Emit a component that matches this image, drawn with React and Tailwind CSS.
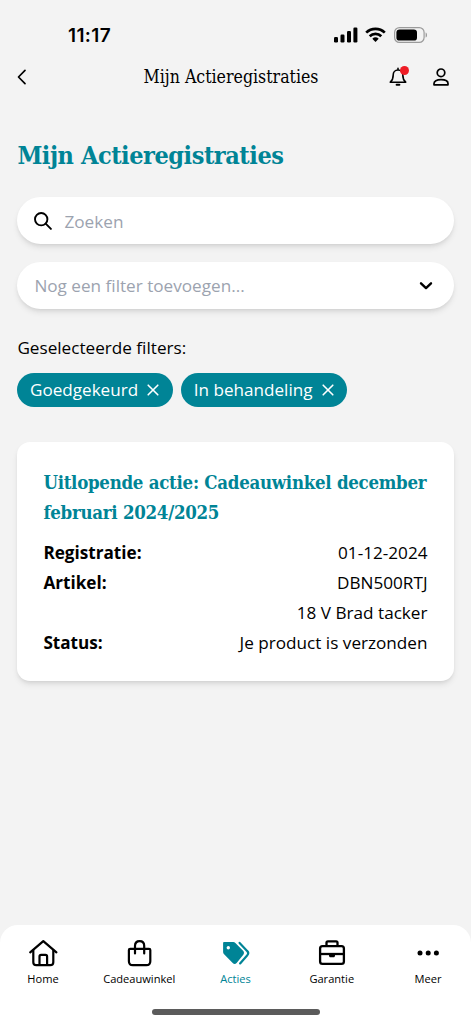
import React from 'react';

const SLAB = "font-['Roboto_Slab','DejaVu_Serif_Condensed','DejaVu_Serif',serif] font-stretch-condensed";

// Status bar
function StatusBar() {
    return (
        <div className="flex h-[54px] items-end justify-between pl-[68px] pr-[43px] pb-[8px]">
            <span className="relative top-px font-['Inter','Liberation_Sans',sans-serif] text-[19px] leading-[22px] font-semibold tracking-[0.4px]">11:17</span>
            <div className="flex h-[22px] items-center">
                <svg width="24" height="16" viewBox="0 0 24 16" fill="black">
                    <rect x="0" y="10" width="4" height="5.5" rx="1.2" />
                    <rect x="6.5" y="7.5" width="4" height="8" rx="1.2" />
                    <rect x="13" y="4" width="4" height="11.5" rx="1.2" />
                    <rect x="19.4" y="0.5" width="4" height="15" rx="1.2" />
                </svg>
                <svg className="ml-[7px]" width="21" height="16" viewBox="0 0 21 16" fill="none" stroke="black" strokeWidth="2.7">
                    <path d="M1.2 5.6a13.4 13.4 0 0 1 18.6 0" />
                    <path d="M4.7 9.2a8.4 8.4 0 0 1 11.6 0" />
                    <path d="M7.3 11.7a4.7 4.7 0 0 1 6.4 0L10.5 15z" fill="black" stroke="none" />
                </svg>
                <svg className="ml-[8px]" width="34" height="16" viewBox="0 0 34 16" fill="none">
                    <rect x="0.6" y="0.6" width="29.5" height="14.8" rx="4.8" stroke="#9b9b9b" strokeWidth="1.2" />
                    <rect x="2.4" y="2.4" width="20.6" height="11.2" rx="3.2" fill="black" />
                    <path d="M31.6 5.4c1.9.6 1.9 4.6 0 5.2z" fill="#9b9b9b" />
                </svg>
            </div>
        </div>
    );
}

// Page header with back button, notifications and profile
function Header() {
    return (
        <header className="grid h-[46px] grid-cols-[75px_1fr_84px] items-center">
            <svg className="ml-[16px]" width="12" height="18" viewBox="0 0 12 18" fill="none" stroke="black" strokeWidth="1.7" strokeLinecap="round" strokeLinejoin="round">
                <path d="M9 2.3 2.5 9 9 15.7" />
            </svg>
            <p className={`text-center text-[17.6px] whitespace-nowrap ${SLAB}`}>Mijn Actieregistraties</p>
            <div className="flex items-center justify-end gap-[26px] pr-[22px]">
                <div className="relative">
                    <svg width="18" height="20" viewBox="0 0 18 20" fill="none" stroke="black" strokeWidth="1.6" strokeLinecap="round" strokeLinejoin="round">
                        <path d="M9 1.4V3M9 3C6 3 4.2 5.3 4.2 8c0 3.8-1 5.6-2.9 7.2h15.4C14.8 13.6 13.8 11.8 13.8 8c0-2.7-1.8-5-4.8-5z" />
                        <path d="M7.6 17.8h2.8" strokeWidth="2" />
                    </svg>
                    <span className="absolute top-[-1px] right-[-2px] h-[9px] w-[9px] rounded-full bg-[#ee1c25]"></span>
                </div>
                <svg width="16" height="18" viewBox="0 0 16 18" fill="none" stroke="black" strokeWidth="1.7" strokeLinejoin="round">
                    <circle cx="8" cy="4.8" r="3.8" />
                    <path d="M1 16.8v-1.3C1 13.2 3.6 11.7 8 11.7s7 1.5 7 3.8v1.3z" />
                </svg>
            </div>
        </header>
    );
}

const filters = ['Goedgekeurd', 'In behandeling'];

const details = [
    { label: 'Registratie:', value: '01-12-2024' },
    { label: 'Artikel:', value: 'DBN500RTJ' },
    { label: '', value: '18 V Brad tacker' },
    { label: 'Status:', value: 'Je product is verzonden' }
];

function HomeIcon() {
    return (
        <svg width="30" height="28" viewBox="0 0 30 28" fill="none" stroke="black" strokeWidth="2.2" strokeLinecap="round" strokeLinejoin="round">
            <path d="M2.2 13.4 15.3 2.1l13.1 11.3" />
            <path d="M5.3 11.4v11.8c0 1.9 1.1 3 3 3h14c1.9 0 3-1.1 3-3V11.4" />
            <path d="M11.5 26v-8.6c0-1 .6-1.6 1.6-1.6h4.4c1 0 1.6.6 1.6 1.6V26" />
        </svg>
    );
}

function BagIcon() {
    return (
        <svg width="30" height="28" viewBox="0 0 30 28" fill="none" stroke="black" strokeWidth="2.2" strokeLinecap="round" strokeLinejoin="round">
            <path d="M6.2 9.8h18.8c.8 0 1.3.5 1.3 1.3v11.1c0 2.5-1.5 4-4 4H8.9c-2.5 0-4-1.5-4-4V11.1c0-.8.5-1.3 1.3-1.3z" />
            <path d="M11 14.5V6.8c0-2.8 1.8-4.7 4.6-4.7s4.6 1.9 4.6 4.7v7.7" />
        </svg>
    );
}

function TagsIcon() {
    return (
        <svg width="30" height="28" viewBox="0 0 30 28" fill="none">
            <g transform="translate(-1 0)">
                <path d="M4 3h9.2c.9 0 1.6.3 2.2.9l7.7 7.9c1.2 1.2 1.2 3 0 4.2l-6.5 8c-1.2 1.2-2.7 1.2-3.9 0l-8.6-8.7a3.2 3.2 0 0 1-1-2.3V4c0-.6.3-1 .9-1zm4.3 4a1.7 1.7 0 1 0 0 3.4 1.7 1.7 0 0 0 0-3.4z" fill="#008496" fillRule="evenodd" />
                <path d="m19.6 3.9 7.5 8c1.4 1.4 1.4 3.2 0 4.6l-7 7.9" stroke="#008496" strokeWidth="2.2" strokeLinecap="round" />
            </g>
        </svg>
    );
}

function BriefcaseIcon() {
    return (
        <svg width="30" height="28" viewBox="0 0 30 28" fill="none" stroke="black" strokeWidth="2.3" strokeLinejoin="round">
            <rect x="3.1" y="7.2" width="23.8" height="17.6" rx="2.4" />
            <path d="M9.5 7V3.7c0-.9.5-1.4 1.4-1.4h8.2c.9 0 1.4.5 1.4 1.4V7" />
            <path d="M3.1 15h23.8" />
            <path d="M12 15h6v1.8c0 .9-.6 1.5-1.5 1.5h-3c-.9 0-1.5-.6-1.5-1.5z" fill="black" stroke="none" />
        </svg>
    );
}

function DotsIcon() {
    return (
        <svg width="30" height="28" viewBox="0 0 30 28" fill="black">
            <circle cx="7" cy="14" r="2.5" />
            <circle cx="15.2" cy="14" r="2.5" />
            <circle cx="23.4" cy="14" r="2.5" />
        </svg>
    );
}

const navItems = [
    { label: 'Home', icon: HomeIcon },
    { label: 'Cadeauwinkel', icon: BagIcon },
    { label: 'Acties', icon: TagsIcon, active: true },
    { label: 'Garantie', icon: BriefcaseIcon },
    { label: 'Meer', icon: DotsIcon }
];

function App() {
    return (
        <div className="flex h-screen flex-col overflow-hidden bg-[#f3f3f3] font-['Open_Sans','Noto_Sans',sans-serif] text-black">
            <StatusBar />
            <Header />

            <main className="flex-1 pr-[17.5px] pl-[17.4px]">
                <h1 className={`mt-[38px] text-[25px] leading-[36px] font-bold tracking-[-0.45px] whitespace-nowrap text-[#008496] ${SLAB}`}>
                    Mijn Actieregistraties
                </h1>

                {/* Search */}
                <label className="mt-[23px] flex h-[47px] items-center rounded-full bg-white pl-[17px] shadow-md">
                    <svg className="shrink-0" width="18" height="18" viewBox="0 0 18 18" fill="none" stroke="black" strokeWidth="1.9" strokeLinecap="round">
                        <circle cx="7.2" cy="7.2" r="6.2" />
                        <path d="m11.7 11.7 5.2 5.2" />
                    </svg>
                    <input
                        type="text"
                        placeholder="Zoeken"
                        className="ml-[12px] w-full bg-transparent pt-[2px] text-[17.2px] outline-none placeholder:text-[#9ca3af]"
                    />
                </label>

                {/* Filter select */}
                <button className="mt-[18px] flex h-[47px] w-full items-center justify-between rounded-full bg-white pr-[21px] pl-[17px] text-[17.15px] text-[#9ca3af] shadow-md">
                    <span>Nog een filter toevoegen...</span>
                    <svg width="14" height="10" viewBox="0 0 14 10" fill="none" stroke="black" strokeWidth="2.4" strokeLinecap="round" strokeLinejoin="round">
                        <path d="m2 2.3 5 4.8 5-4.8" />
                    </svg>
                </button>

                <p className="mt-[26px] text-[17.15px] leading-[26px]">Geselecteerde filters:</p>
                <div className="mt-[12px] flex gap-[8.5px]">
                    {filters.map((filter) => (
                        <button key={filter} className="flex h-[34px] items-center rounded-full bg-[#008496] px-[12.6px] text-[17.1px] whitespace-nowrap text-white">
                            {filter}
                            <svg className="ml-[8px]" width="14" height="14" viewBox="0 0 14 14" stroke="white" strokeWidth="1.6" strokeLinecap="round">
                                <path d="m2.2 2.2 9.6 9.6M11.8 2.2l-9.6 9.6" />
                            </svg>
                        </button>
                    ))}
                </div>

                {/* Registration card */}
                <section className="mt-[35px] h-[239px] rounded-[13px] bg-white px-[26px] pt-[26px] shadow-md">
                    <h2 className={`text-[18.5px] leading-[30px] font-bold tracking-[-0.27px] whitespace-nowrap text-[#008496] ${SLAB}`}>
                        Uitlopende actie: Cadeauwinkel december<br />februari 2024/2025
                    </h2>
                    <dl className="mt-[10px] text-[17.15px] leading-[30px]">
                        {details.map((row) => (
                            <div key={row.value} className="flex justify-between whitespace-nowrap">
                                <dt className="font-bold">{row.label}</dt>
                                <dd>{row.value}</dd>
                            </div>
                        ))}
                    </dl>
                </section>
            </main>

            {/* Bottom navigation */}
            <nav className="flex h-[99px] flex-col items-center rounded-t-[18px] bg-white">
                <div className="flex w-full justify-between px-[3px] pt-[14px]">
                    {navItems.map((item) => (
                        <a key={item.label} className={`flex w-[80px] flex-col items-center text-[11.1px] leading-[16px] ${item.active ? 'text-[#008496]' : ''}`}>
                            <item.icon />
                            <span className="mt-[4px]">{item.label}</span>
                        </a>
                    ))}
                </div>
                <div className="mt-[22px] h-[6px] w-[168px] rounded-full bg-[#5b5b5b]"></div>
            </nav>
        </div>
    );
}

export default App;
